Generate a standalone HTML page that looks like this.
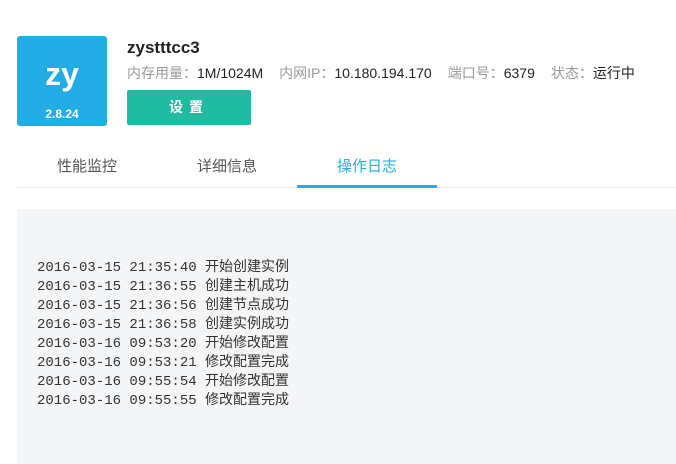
<!DOCTYPE html>
<html><head><meta charset="utf-8"><style>
body{margin:0;width:676px;height:464px;background:#fff;font-family:"Liberation Sans","Noto Sans CJK SC",sans-serif;position:relative;overflow:hidden}
.logo{position:absolute;left:17px;top:36px;width:90px;height:90px;background:#22aee5;border-radius:3px;color:#fff;text-align:center}
.logo .a{position:absolute;top:18px;left:0;right:0;font-size:32px;font-weight:bold;line-height:40px}
.logo .b{position:absolute;top:71px;left:0;right:0;font-size:12px;font-weight:bold}
.name{position:absolute;left:127px;top:38px;font-size:17px;font-weight:bold;color:#222}
.info{position:absolute;left:127px;top:63px;font-size:14px;color:#222;white-space:nowrap}
.info span.l{color:#999}
.info span.g{display:inline-block;width:16px}
.btn{position:absolute;left:127px;top:90px;width:124px;height:35px;background:#21bba1;border-radius:2px;color:#fff;font-size:14px;font-weight:bold;text-align:center;line-height:35px;letter-spacing:6px}
.tab{position:absolute;top:155px;font-size:15px;color:#555;width:140px;text-align:center}
.line{position:absolute;left:17px;right:0;top:187px;height:1px;background:#e8eaed}
.ul{position:absolute;left:297px;top:185px;width:140px;height:3px;background:#22aee5}
.box{position:absolute;left:17px;top:209px;right:0;bottom:0;background:#f4f5f7}
pre{position:absolute;left:37px;top:259px;margin:0;font-family:"Liberation Mono","Noto Sans CJK SC",monospace;font-size:14px;line-height:19px;color:#333}
</style></head><body>
<div class="logo"><div class="a">zy</div><div class="b">2.8.24</div></div>
<div class="name">zystttcc3</div>
<div class="info"><span class="l">内存用量：</span>1M/1024M<span class="g"></span><span class="l">内网IP：</span>10.180.194.170<span class="g"></span><span class="l">端口号：</span>6379<span class="g"></span><span class="l">状态：</span>运行中</div>
<div class="btn">设置</div>
<div class="tab" style="left:17px">性能监控</div>
<div class="tab" style="left:157px">详细信息</div>
<div class="tab" style="left:297px;color:#22aee5">操作日志</div>
<div class="line"></div><div class="ul"></div>
<div class="box"></div>
<pre>2016-03-15 21:35:40 开始创建实例
2016-03-15 21:36:55 创建主机成功
2016-03-15 21:36:56 创建节点成功
2016-03-15 21:36:58 创建实例成功
2016-03-16 09:53:20 开始修改配置
2016-03-16 09:53:21 修改配置完成
2016-03-16 09:55:54 开始修改配置
2016-03-16 09:55:55 修改配置完成</pre>
</body></html>
